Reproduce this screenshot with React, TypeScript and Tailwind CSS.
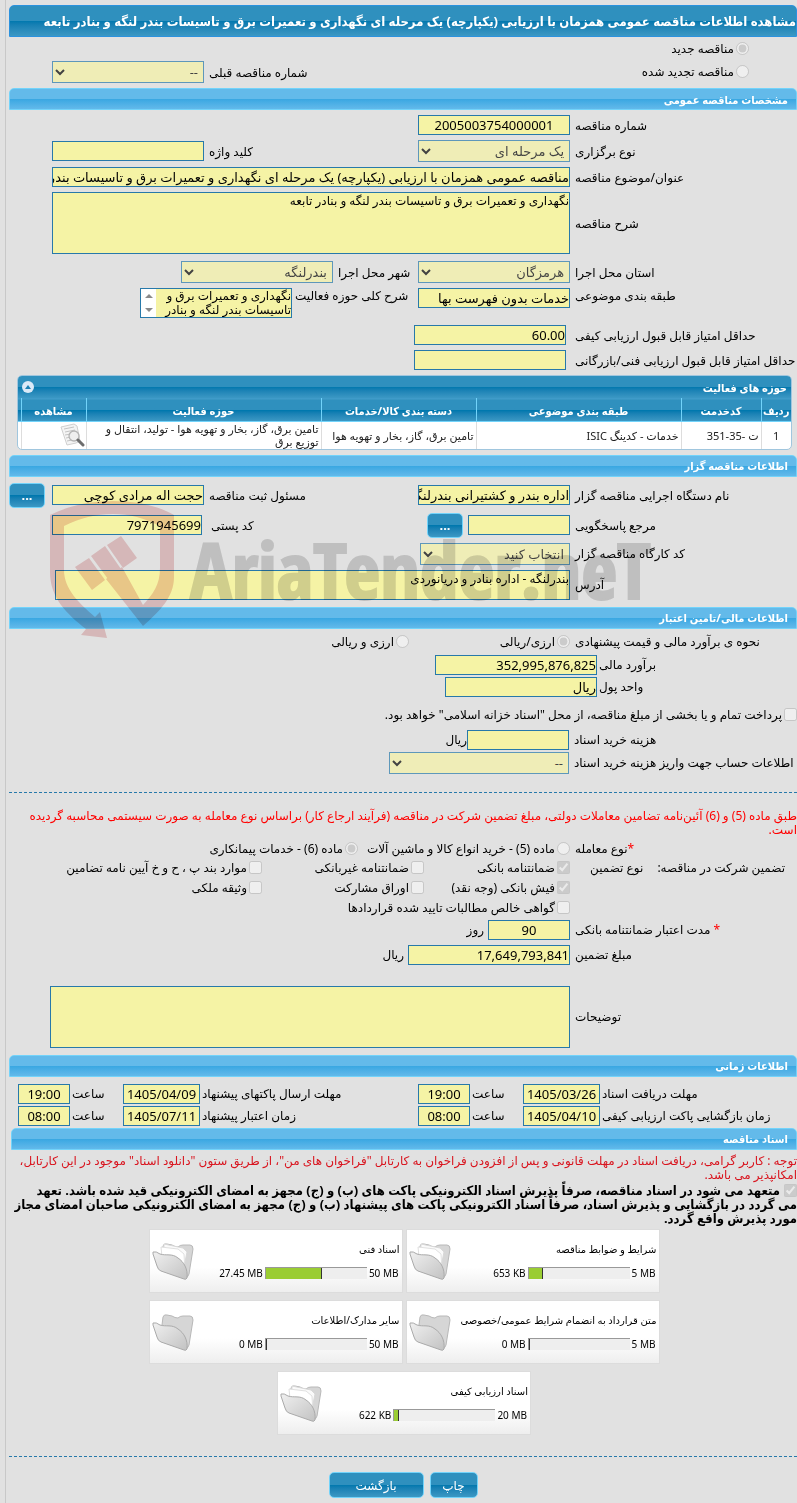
import type { ReactNode } from 'react';

const FIELD = 'block w-full border border-[#2779aa] bg-[#f5f3a5] text-[13px] text-black';
const GLOSSY = 'bg-linear-to-b from-[#2f90be] from-50% via-[#0078ae] via-50% to-[#3b98c4]';
const NARROW = "font-['Noto_Sans','DejaVu_Sans_Condensed','DejaVu_Sans',sans-serif]";
const GRID = 'grid grid-cols-[minmax(0,1fr)_152px_214px_152px_43px] items-center';

function SectionBar({ title }: { title: string }) {
  return (
    <h2
      className={`flex h-[22px] items-center rounded-t-[5px] border border-[#72d3fa] bg-linear-to-b from-[#63baea] from-50% via-[#38a7e2] via-50% to-[#62b9ea] px-2 text-[11px] font-bold text-white ${NARROW}`}
    >
      {title}
    </h2>
  );
}

function Label({ htmlFor, className = '', children }: { htmlFor?: string; className?: string; children: ReactNode }) {
  return (
    <label htmlFor={htmlFor} className={`block pe-[5px] text-end whitespace-nowrap ${className}`}>
      {children}
    </label>
  );
}

function TextField({ id, value = '', className = '' }: { id: string; value?: string; className?: string }) {
  return <input id={id} readOnly value={value} className={`${FIELD} h-5 ${className}`} />;
}

function SelectField({ id, value, className = '' }: { id: string; value: string; className?: string }) {
  return (
    <select id={id} disabled className={`${FIELD} h-[22px] px-px disabled:opacity-70 ${className}`}>
      <option>{value}</option>
    </select>
  );
}

function Choice({
  type,
  name,
  checked = false,
  className = '',
  children,
}: {
  type: 'radio' | 'checkbox';
  name?: string;
  checked?: boolean;
  className?: string;
  children: ReactNode;
}) {
  return (
    <label className={`flex items-center gap-[2px] whitespace-nowrap ${className}`}>
      <input type={type} name={name} defaultChecked={checked} disabled className="size-[13px] shrink-0" />
      {children}
    </label>
  );
}

function MoreButton({ label }: { label: string }) {
  return (
    <button
      type="button"
      aria-label={label}
      className={`h-[25px] w-9 rounded-[5px] border border-[#72d3fa] text-[13px] font-bold text-white ${GLOSSY}`}
    >
      ...
    </button>
  );
}

function Watermark() {
  return (
    <div
      dir="ltr"
      aria-hidden="true"
      className="pointer-events-none absolute top-[45px] left-[41px] flex items-start gap-[14px] mix-blend-multiply"
    >
      <svg width="126" height="140" viewBox="0 0 126 140" fill="#f2d0d1">
        <path
          fillRule="evenodd"
          d="M0 15C20 5 42 1 63 1s44 4 61 14v62c0 20-14 34-31 49L56 79 72 67 93 105c10-11 17-20 17-37V26C94 18 80 14 63 14S30 18 14 26v44c0 19 15 33 31 47l5-5 7 26-26-3 5-6C17 114 0 98 0 72z"
        />
        <path d="M25 67 39 58 55 80 42 90z" />
        <path d="M41 56 55 46 71 69 58 79z" />
        <path d="M57 45 71 36 87 58 73 68z" />
      </svg>
      <span className="pt-[29px] font-['Liberation_Sans_Narrow','Open_Sans_Condensed','Roboto',sans-serif] text-[78px] leading-[80px] font-bold text-[#d9d9d9] [-webkit-text-stroke:2px_#d9d9d9]">
        AriaTender.neT
      </span>
    </div>
  );
}

function ViewIcon() {
  return (
    <svg width="25" height="24" viewBox="0 0 25 24" fill="none">
      <path d="M1 4 14 1l3 2 3 15-4 2-9 2z" fill="#f4f4f4" stroke="#d0d0d0" />
      <path d="M4 6l10-2M5 9l10-2M5 12l6-1M6 15l5-1M7 18l5-1" stroke="#c4c4c4" />
      <circle cx="14" cy="13" r="5" fill="#ededed" fillOpacity=".8" stroke="#b5b5b5" strokeWidth="1.3" />
      <path d="m18 17 5 5" stroke="#6d6d6d" strokeWidth="3" strokeLinecap="round" />
    </svg>
  );
}

function FolderIcon({ filled }: { filled: boolean }) {
  return (
    <svg width="42" height="38" viewBox="0 0 42 38" fill="none" strokeLinejoin="round" className="shrink-0">
      <defs>
        <linearGradient id="folder" x1="0" y1="0" x2="1" y2="1">
          <stop offset="0" stopColor="#f0f0f0" />
          <stop offset="1" stopColor="#c2c2c2" />
        </linearGradient>
      </defs>
      <path
        d="M10 12 11 4q1-3 4-2l5 1q3 2 6 2 2-2 5-2h7q3 0 3 4l-4 25q-1 4-4 3z"
        fill="#d6d6d6"
        stroke="#b8b8b8"
      />
      {filled && (
        <>
          <path d="m12 2 19 4 4 4-4 20-20-6z" fill="#fafafa" stroke="#d8d8d8" />
          <path d="m9 5 17 2 6 5 1 18-22-6z" fill="#fff" stroke="#e0e0e0" />
        </>
      )}
      <path
        d="M1 10q3-1 7 2c6 2 12-1 18 4 6 4 10 11 9 20q-1 2-3 1L9 29q-3-1-4-5L1 12z"
        fill="url(#folder)"
        stroke="#aaaaaa"
      />
    </svg>
  );
}

const activityColumns = [
  { title: 'ردیف', width: 'w-[30px]' },
  { title: 'کدخدمت', width: 'w-[80px]' },
  { title: 'طبقه بندی موضوعی', width: 'w-[205px]' },
  { title: 'دسته بندی کالا/خدمات', width: 'w-[155px]' },
  { title: 'حوزه فعالیت', width: '' },
  { title: 'مشاهده', width: 'w-[65px]' },
];

function ActivityPanel() {
  return (
    <div className="ms-[5px] me-2 overflow-hidden rounded-[5px] border border-[#a0c6de] bg-white">
      <div className={`flex h-[22px] items-center justify-between px-1 text-[11px] font-bold text-white ${NARROW} ${GLOSSY}`}>
        <h3>حوزه های فعالیت</h3>
        <button type="button" aria-label="بستن" className="flex size-3 items-center justify-center rounded-full bg-[#dbe9f7]">
          <svg width="6" height="4" viewBox="0 0 6 4" fill="#1c7fb3">
            <path d="m0 4 3-4 3 4z" />
          </svg>
        </button>
      </div>
      <table className="w-full table-fixed text-[11px]">
        <thead className={NARROW}>
          <tr className={`h-[23px] border-y border-t-[#3f9bc9] border-b-[#72d3fa] text-white ${GLOSSY}`}>
            {activityColumns.map((c) => (
              <th key={c.title} scope="col" className={`border-e border-[#72d3fa] whitespace-nowrap ${c.width}`}>
                {c.title}
              </th>
            ))}
            <td className="w-[3px]" />
          </tr>
        </thead>
        <tbody>
          <tr className="h-[27px] text-[#222] [&>td]:border-e [&>td]:border-[#dddddd] [&>td:last-child]:border-e-0">
            <td className="text-center">1</td>
            <td className="px-[2px]">
              ت -<bdi dir="ltr">351-35</bdi>
            </td>
            <td className="px-[2px]">خدمات - کدینگ ISIC</td>
            <td className="px-[2px] whitespace-nowrap">تامین برق، گاز، بخار و تهویه هوا</td>
            <td className="px-[2px] leading-[13px]">تامین برق، گاز، بخار و تهویه هوا - تولید، انتقال و توزیع برق</td>
            <td className="ps-[1px]">
              <ViewIcon />
            </td>
            <td />
          </tr>
        </tbody>
      </table>
    </div>
  );
}

function Deadline({ id, label, date, time }: { id: string; label: string; date: string; time: string }) {
  return (
    <>
      <Label htmlFor={id} className="pe-[2px]!">
        {label}
      </Label>
      <TextField id={id} value={date} className="text-center" />
      <Label htmlFor={`${id}-time`} className="pe-[2px]!">
        ساعت
      </Label>
      <TextField id={`${id}-time`} value={time} className="text-center" />
    </>
  );
}

const documents = [
  { title: 'شرایط و ضوابط مناقصه', used: '653 KB', limit: '5 MB', percent: 14 },
  { title: 'اسناد فنی', used: '27.45 MB', limit: '50 MB', percent: 56 },
  { title: 'متن قرارداد به انضمام شرایط عمومی/خصوصی', used: '0 MB', limit: '5 MB', percent: 0 },
  { title: 'سایر مدارک/اطلاعات', used: '0 MB', limit: '50 MB', percent: 0 },
  { title: 'اسناد ارزیابی کیفی', used: '622 KB', limit: '20 MB', percent: 5 },
];

function DocumentCard({ title, used, limit, percent }: (typeof documents)[number]) {
  return (
    <div
      dir="ltr"
      className="flex h-16 w-[254px] items-center gap-1 border border-[#dcdcdc] bg-linear-to-b from-white from-60% to-[#eeeeee] px-[2px] text-[10px]"
    >
      <FolderIcon filled={percent > 0} />
      <div className="flex min-w-0 flex-1 flex-col gap-[11px] pb-[2px]">
        <div dir="rtl" className="leading-[14px] whitespace-nowrap">
          {title}
        </div>
        <div className="flex items-center justify-end gap-[2px] pr-px leading-3">
          <span>{used}</span>
          <span className="h-3 w-[102px] border-t border-l border-[#999999] bg-[#eeeeee]">
            <span className="block h-full border-r border-[#333333] bg-[#9acd32]" style={{ width: `${percent}%` }} />
          </span>
          <span>{limit}</span>
        </div>
      </div>
    </div>
  );
}

export default function App() {
  return (
    <div
      dir="rtl"
      lang="fa"
      className="min-h-screen overflow-x-hidden bg-[#e1e1e1] pl-[5px] font-['Noto_Sans','DejaVu_Sans',sans-serif] text-[12px] leading-[15px] text-black"
    >
      <main className="min-h-screen border-l border-[#c8c8c8] pt-[5px] pl-[3px]">
        <h1
          className={`flex h-8 items-center overflow-hidden rounded-t-[5px] border border-[#2b92de] text-[13px] font-bold whitespace-nowrap text-white ${NARROW} ${GLOSSY}`}
        >
          مشاهده اطلاعات مناقصه عمومی همزمان با ارزیابی (یکپارچه) یک مرحله ای نگهداری و تعمیرات برق و تاسیسات بندر لنگه و
          بنادر تابعه
        </h1>

        <div className="grid grid-cols-[minmax(0,1fr)_152px_43px] items-end pt-1 pb-[5px]">
          <div className="flex items-end justify-between ps-12">
            <div className="flex flex-col gap-2">
              <Choice type="radio" name="kind" checked>
                مناقصه جدید
              </Choice>
              <Choice type="radio" name="kind" className="pb-1">
                مناقصه تجدید شده
              </Choice>
            </div>
            <Label htmlFor="previous" className="pb-[3px]">
              شماره مناقصه قبلی
            </Label>
          </div>
          <SelectField id="previous" value="--" />
        </div>

        <SectionBar title="مشخصات مناقصه عمومی" />
        <section className="flex flex-col gap-[5px] py-[5px]">
          <div className={GRID}>
            <Label htmlFor="number">شماره مناقصه</Label>
            <TextField id="number" value="2005003754000001" className="text-center" />
          </div>
          <div className={GRID}>
            <Label htmlFor="stage">نوع برگزاری</Label>
            <SelectField id="stage" value="یک مرحله ای" />
            <Label htmlFor="keyword">کلید واژه</Label>
            <TextField id="keyword" />
          </div>
          <div className={GRID}>
            <Label htmlFor="subject">عنوان/موضوع مناقصه</Label>
            <TextField
              id="subject"
              value="مناقصه عمومی همزمان با ارزیابی (یکپارچه) یک مرحله ای نگهداری و تعمیرات برق و تاسیسات بندر لنگه و بنادر تابعه"
              className="col-span-3"
            />
          </div>
          <div className={GRID}>
            <Label htmlFor="description">شرح مناقصه</Label>
            <textarea
              id="description"
              readOnly
              value="نگهداری و تعمیرات برق و تاسیسات بندر لنگه و بنادر تابعه"
              className={`${FIELD} col-span-3 h-[62px] resize-none text-[12px]! leading-[15px]`}
            />
          </div>
          <div className="grid grid-cols-[minmax(0,1fr)_152px_85px_152px_172px] items-center pt-[2px]">
            <Label htmlFor="province">استان محل اجرا</Label>
            <SelectField id="province" value="هرمزگان" />
            <Label htmlFor="city">شهر محل اجرا</Label>
            <SelectField id="city" value="بندرلنگه" />
          </div>
          <div className="grid grid-cols-[minmax(0,1fr)_152px_126px_152px_131px] items-start">
            <Label htmlFor="category">طبقه بندی موضوعی</Label>
            <TextField id="category" value="خدمات بدون فهرست بها" />
            <Label htmlFor="scope" className="pe-[3px]!">
              شرح کلی حوزه فعالیت
            </Label>
            <div className="flex h-[30px] border border-[#2779aa]">
              <textarea
                id="scope"
                readOnly
                value="نگهداری و تعمیرات برق و تاسیسات بندر لنگه و بنادر تابعه"
                className="min-w-0 flex-1 resize-none overflow-hidden bg-[#f5f3a5] leading-[14px]"
              />
              <div className="flex w-[15px] flex-col items-center justify-around bg-white">
                <svg width="8" height="4" viewBox="0 0 8 4" fill="#8a8a8a">
                  <path d="m0 4 4-4 4 4z" />
                </svg>
                <svg width="8" height="4" viewBox="0 0 8 4" fill="#8a8a8a">
                  <path d="m0 0 4 4 4-4z" />
                </svg>
              </div>
            </div>
          </div>
          <div className="grid grid-cols-[minmax(0,1fr)_152px_405px] items-center gap-y-[5px] pt-[2px]">
            <Label htmlFor="quality" className="pe-[9px]!">
              حداقل امتیاز قابل قبول ارزیابی کیفی
            </Label>
            <TextField id="quality" value="60.00" />
            <span />
            <Label htmlFor="technical" className="pe-[9px]!">
              حداقل امتیاز قابل قبول ارزیابی فنی/بازرگانی
            </Label>
            <TextField id="technical" />
          </div>
          <ActivityPanel />
        </section>

        <div className="relative">
          <SectionBar title="اطلاعات مناقصه گزار" />
          <section className="flex flex-col gap-[5px] pt-[6px] pb-[7px]">
            <div className={GRID}>
              <Label htmlFor="agency">نام دستگاه اجرایی مناقصه گزار</Label>
              <TextField id="agency" value="اداره بندر و کشتیرانی بندرلنگه" />
              <Label htmlFor="registrar">مسئول ثبت مناقصه</Label>
              <TextField id="registrar" value="حجت اله مرادی کوچی" />
              <div className="flex justify-end">
                <MoreButton label="انتخاب مسئول" />
              </div>
            </div>
            <div className="grid grid-cols-[minmax(0,1fr)_152px_216px_150px_43px] items-center">
              <Label htmlFor="contact">مرجع پاسخگویی</Label>
              <div className="flex items-center gap-[5px]">
                <TextField id="contact" className="w-[102px]!" />
                <MoreButton label="انتخاب مرجع" />
              </div>
              <Label htmlFor="postcode" className="pe-[9px]!">
                کد پستی
              </Label>
              <TextField id="postcode" value="7971945699" />
            </div>
            <div className="grid grid-cols-[minmax(0,1fr)_150px_411px] items-center">
              <Label htmlFor="workshop">کد کارگاه مناقصه گزار</Label>
              <SelectField id="workshop" value="انتخاب کنید" />
            </div>
            <div className="grid grid-cols-[minmax(0,1fr)_515px_46px] items-center">
              <Label htmlFor="address">آدرس</Label>
              <textarea
                id="address"
                readOnly
                value="بندرلنگه - اداره بنادر و دریانوردی"
                className={`${FIELD} h-[30px] resize-none text-[12px]! leading-[15px]`}
              />
            </div>
          </section>
          <SectionBar title="اطلاعات مالی/تامین اعتبار" />
          <Watermark />
        </div>

        <section className="flex flex-col gap-[2px] pt-[5px]">
          <div className="grid h-4 grid-cols-[minmax(0,1fr)_161px_400px] items-center">
            <Label>نحوه ی برآورد مالی و قیمت پیشنهادی</Label>
            <Choice type="radio" name="currency" checked>
              ارزی/ریالی
            </Choice>
            <Choice type="radio" name="currency">
              ارزی و ریالی
            </Choice>
          </div>
          <div className="grid grid-cols-[minmax(0,1fr)_162px_426px] items-center pt-[3px]">
            <Label htmlFor="estimate" className="pe-[2px]!">
              برآورد مالی
            </Label>
            <TextField id="estimate" value="352,995,876,825" />
          </div>
          <div className="grid grid-cols-[minmax(0,1fr)_152px_436px] items-center">
            <Label htmlFor="unit" className="pe-[2px]!">
              واحد پول
            </Label>
            <TextField id="unit" value="ریال" />
          </div>
          <Choice type="checkbox" className="h-7 pt-1">
            پرداخت تمام و یا بخشی از مبلغ مناقصه، از محل "اسناد خزانه اسلامی" خواهد بود.
          </Choice>
          <div className="grid grid-cols-[minmax(0,1fr)_102px_458px] items-center pt-[1px]">
            <Label htmlFor="fee">هزینه خرید اسناد</Label>
            <TextField id="fee" />
            <span>ریال</span>
          </div>
          <div className="grid grid-cols-[minmax(0,1fr)_180px_380px] items-center">
            <Label htmlFor="account">اطلاعات حساب جهت واریز هزینه خرید اسناد</Label>
            <SelectField id="account" value="--" />
          </div>
        </section>

        <hr className="mt-[18px] border-dashed border-[#2779aa]" />

        <section className="pt-4">
          <p className="leading-[14px] text-[#ff0000]">
            طبق ماده (5) و (6) آئین‌نامه تضامین معاملات دولتی، مبلغ تضمین شرکت در مناقصه (فرآیند ارجاع کار) براساس نوع
            معامله به صورت سیستمی محاسبه گردیده است.
          </p>
          <div className="grid grid-cols-[minmax(0,1fr)_212px_349px] items-center pt-1">
            <Label>
              <span className="text-[#ff0000]">*</span>نوع معامله
            </Label>
            <Choice type="radio" name="deal">
              ماده (5) - خرید انواع کالا و ماشین آلات
            </Choice>
            <Choice type="radio" name="deal" checked>
              ماده (6) - خدمات پیمانکاری
            </Choice>
          </div>
          <div className="grid grid-cols-[minmax(0,1fr)_146px_162px_253px] gap-y-[5px] pt-1">
            <div className="flex justify-between ps-3 pe-5">
              <span>تضمین شرکت در مناقصه:</span>
              <span>نوع تضمین</span>
            </div>
            <Choice type="checkbox" checked>
              ضمانتنامه بانکی
            </Choice>
            <Choice type="checkbox">ضمانتنامه غیربانکی</Choice>
            <Choice type="checkbox">موارد بند پ ، ح و خ آیین نامه تضامین</Choice>
            <Choice type="checkbox" checked className="col-start-2">
              فیش بانکی (وجه نقد)
            </Choice>
            <Choice type="checkbox">اوراق مشارکت</Choice>
            <Choice type="checkbox">وثیقه ملکی</Choice>
            <Choice type="checkbox" className="col-span-3 col-start-2">
              گواهی خالص مطالبات تایید شده قراردادها
            </Choice>
          </div>
          <div className="grid grid-cols-[minmax(0,1fr)_82px_479px] items-center pt-[5px]">
            <Label htmlFor="validity">
              <span className="text-[#ff0000]">*</span> مدت اعتبار ضمانتنامه بانکی
            </Label>
            <TextField id="validity" value="90" className="text-center" />
            <span className="ps-1">روز</span>
          </div>
          <div className="grid grid-cols-[minmax(0,1fr)_162px_399px] items-center pt-[5px]">
            <Label htmlFor="amount">مبلغ تضمین</Label>
            <TextField id="amount" value="17,649,793,841" />
            <span className="ps-1">ریال</span>
          </div>
          <div className="grid grid-cols-[minmax(0,1fr)_520px_41px] items-center pt-[21px] pb-[7px]">
            <Label htmlFor="notes">توضیحات</Label>
            <textarea id="notes" readOnly className={`${FIELD} h-[62px] resize-none`} />
          </div>
        </section>

        <SectionBar title="اطلاعات زمانی" />
        <section className="grid grid-cols-[minmax(0,1fr)_77px_53px_52px_218px_77px_53px_52px_9px] items-center gap-y-[2px] pt-[7px] pb-[2px]">
          <Deadline id="receive" label="مهلت دریافت اسناد" date="1405/03/26" time="19:00" />
          <Deadline id="send" label="مهلت ارسال پاکتهای پیشنهاد" date="1405/04/09" time="19:00" />
          <span />
          <Deadline id="open" label="زمان بازگشایی پاکت ارزیابی کیفی" date="1405/04/10" time="08:00" />
          <Deadline id="valid" label="زمان اعتبار پیشنهاد" date="1405/07/11" time="08:00" />
        </section>

        <section className="pl-[2px]">
          <SectionBar title="اسناد مناقصه" />
          <p className="pt-1 leading-[14px] text-[#d9141e]">
            توجه : کاربر گرامی، دریافت اسناد در مهلت قانونی و پس از افزودن فراخوان به کارتابل "فراخوان های من"، از طریق
            ستون "دانلود اسناد" موجود در این کارتابل، امکانپذیر می باشد.
          </p>
          <label className={`block pt-px text-[13px] leading-[14px] font-bold ${NARROW}`}>
            <input type="checkbox" defaultChecked disabled className="me-1 size-[13px] align-middle" />
            متعهد می شود در اسناد مناقصه، صرفاً پذیرش اسناد الکترونیکی پاکت های (ب) و (ج) مجهز به امضای الکترونیکی قید شده
            باشد. تعهد <span className="whitespace-nowrap">می گردد</span> در بازگشایی و پذیرش اسناد، صرفاً اسناد الکترونیکی
            پاکت های پیشنهاد (ب) و (ج) مجهز به امضای الکترونیکی صاحبان امضای مجاز مورد پذیرش واقع گردد.
          </label>
          <div className="mx-auto flex max-w-[520px] flex-wrap justify-center gap-x-[3px] gap-y-[7px] pt-1">
            {documents.map((d) => (
              <DocumentCard key={d.title} {...d} />
            ))}
          </div>
        </section>

        <hr className="mt-[21px] border-dashed border-[#2779aa]" />

        <div className="flex justify-center gap-[6px] pt-[15px]">
          <button
            type="button"
            className={`h-[26px] w-12 rounded-[5px] border border-[#72d3fa] text-[12px] text-white ${GLOSSY}`}
          >
            چاپ
          </button>
          <button
            type="button"
            className={`h-[26px] w-[95px] rounded-[5px] border border-[#72d3fa] text-[12px] text-white ${GLOSSY}`}
          >
            بازگشت
          </button>
        </div>
      </main>
    </div>
  );
}
